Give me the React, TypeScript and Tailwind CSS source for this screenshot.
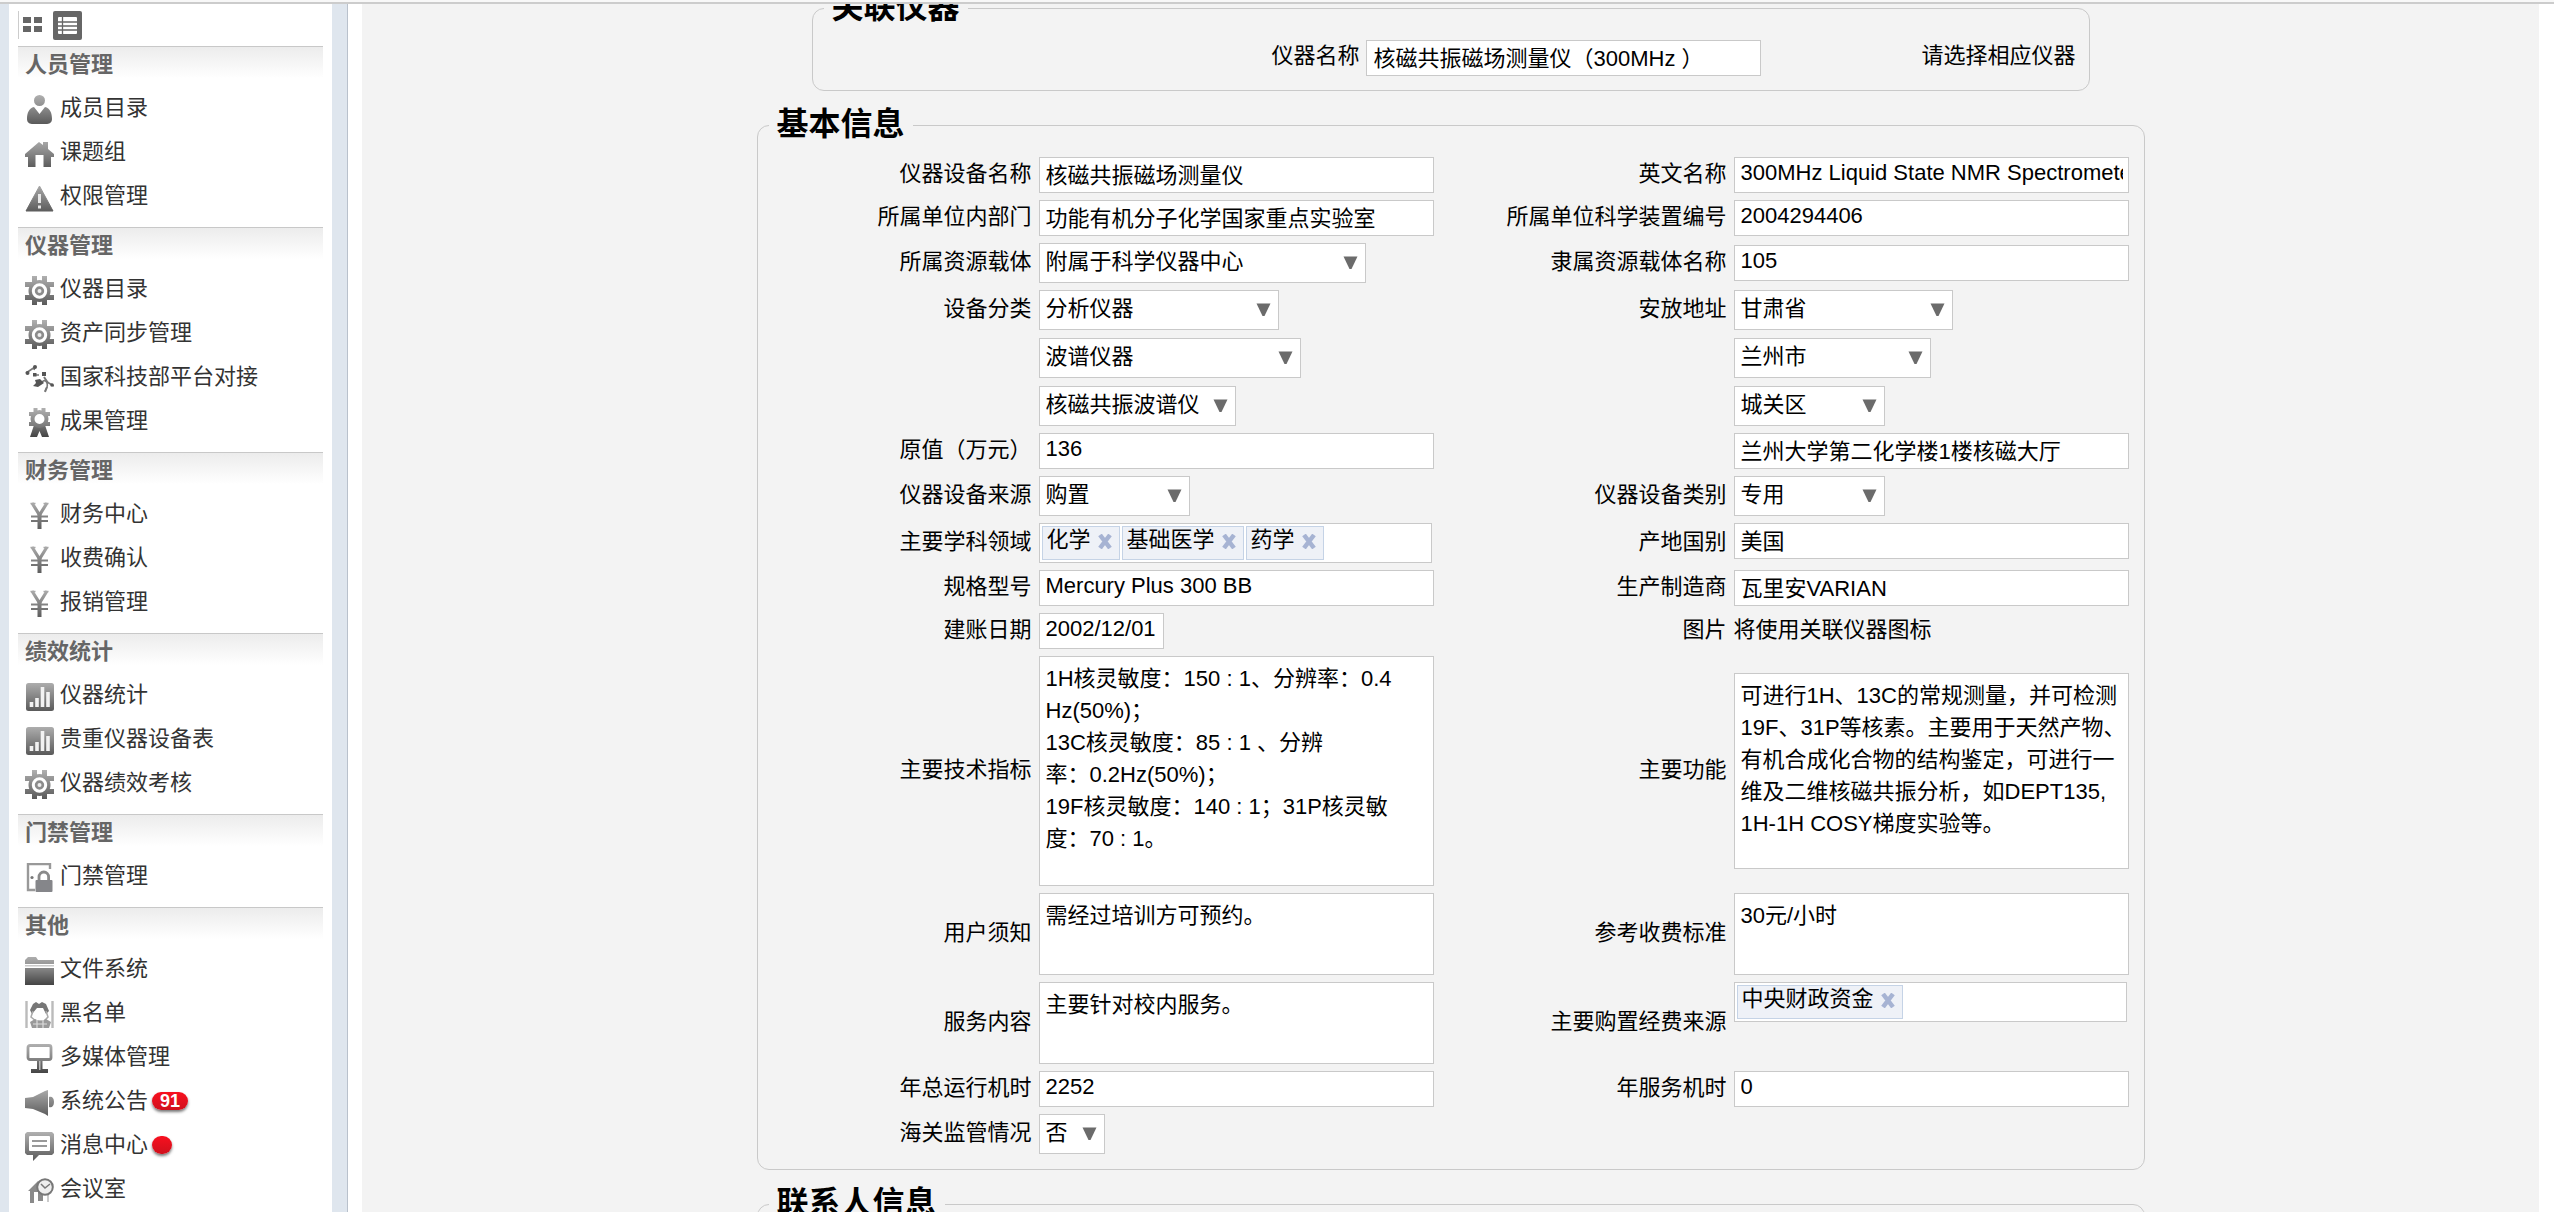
import type { ReactNode } from "react";
import { clsx } from "clsx";

// ── Sidebar icons (29×29, shared vertical gradient) ──────────────────────────

const FILL = "url(#icon-shade)";

const ICONS: Record<string, ReactNode> = {
  user: (
    <g fill={FILL}>
      <circle cx="14.5" cy="5.5" r="5.5" />
      <path d="M2 24c0-6 2-11 7-12l5.5 7 5.500-7c5 1 7 6 7 12 0 4-3 5-6 5H8c-3 0-6-1-6-5z" />
    </g>
  ),
  home: <path fill={FILL} d="M0 15L14 3l4 3V3h5v7l6 5v3h-3v10h-7.500V16h-8v12H3V18H0z" />,
  warning: (
    <g>
      <path fill={FILL} d="M14.500 3L28 28H1z" stroke={FILL} strokeLinejoin="round" />
      <path d="M14.500 11v9M14.500 22.500v3" stroke="#e8e8e8" strokeWidth="3" />
    </g>
  ),
  gear: (
    <g>
      <g fill={FILL}>
        <path d="M7 0h5v29H7zM17 0h5v29h-5z" />
        <path d="M0 6h29v5H0zM0 19h29v5H0z" />
      </g>
      <circle cx="14.500" cy="15" r="11" fill={FILL} />
      <path d="M12.500 0h4v3h-4zM12.500 26.500h4V29h-4z" fill="#fff" />
      <circle cx="14.500" cy="15" r="6.200" fill="#8c8c8c" stroke="#fff" strokeWidth="3" />
      <circle cx="14.500" cy="15" r="2" fill="#eee" />
    </g>
  ),
  network: (
    <g stroke="#777" fill="#555">
      <path d="M1 9l9-6M10 3l-1 3M17 18c4-4 6 2 5 5l-2 4M22 18l7 4M11 11h3" strokeWidth="1.600" fill="none" />
      <circle cx="10" cy="3" r="2" stroke="none" />
      <circle cx="2.500" cy="9" r="2" stroke="none" />
      <rect x="8" y="9" width="3.500" height="3.500" stroke="none" />
      <rect x="17" y="8" width="4" height="4" stroke="none" />
      <path d="M10 16l5-1 4 4-6 4-5-1 3-3z" stroke="none" />
      <path d="M19 13l4 6M22 23l-2 5" strokeWidth="2" />
      <circle cx="27" cy="21" r="1.800" stroke="none" />
    </g>
  ),
  award: (
    <g>
      <path fill="url(#icon-dark)" d="M9 17L5 29h7l2.500-6 2.500 6h7l-4-12z" />
      <path stroke={FILL} strokeWidth="4" d="M10.500 0v6M18.500 0v6M4 6h6M19 6h6M4 16h6M19 16h6" />
      <circle cx="14.500" cy="11" r="7" fill="#fff" stroke={FILL} strokeWidth="4" />
    </g>
  ),
  yen: (
    <g stroke={FILL} fill="none">
      <path d="M7 2l7.500 12L22 2" strokeWidth="3.200" />
      <path d="M6 15.500h17M6 20h17" strokeWidth="2.200" />
      <path d="M14.500 13v15" strokeWidth="4" />
      <path d="M5.500 2.500h5M18.500 2.500h5" strokeWidth="1.500" />
    </g>
  ),
  chart: (
    <g>
      <rect x="1" y="1" width="28" height="28" rx="2.500" fill={FILL} />
      <path d="M6.500 25v-5M12 25v-9M17.500 25V5M23 25V10" stroke="#f2f2f2" strokeWidth="3.600" />
    </g>
  ),
  door: (
    <g>
      <path d="M25 6V1H3v26h7" fill="none" stroke="#999" strokeWidth="2.400" />
      <circle cx="7" cy="14.500" r="1.600" fill="#777" />
      <path d="M14 18v-4a4.800 5 0 0 1 9.600 0v4" fill="none" stroke="#8a8a8a" strokeWidth="2.800" />
      <rect x="10.500" y="17" width="17" height="12" rx="1" fill="#85868a" />
    </g>
  ),
  folder: (
    <g fill={FILL}>
      <path d="M0 4l3-3h8l2 3h16v4H0z" />
      <path d="M0 12h29v17H0z" fill="url(#icon-dark)" />
      <path d="M0 9h29v1.500H0z" opacity=".5" />
    </g>
  ),
  blacklist: (
    <g>
      <path d="M1.500 1v27M27.500 1v27" stroke="#bbb" strokeWidth="2.400" />
      <path d="M8 4l3-2 3 2 3-2 4 2 3 7-3 3-3-6h-6l-5 6-2-4z" fill="#777" />
      <path d="M8 11l-2 6 5 4h8l4-4-2-6" fill="none" stroke="#aaa" strokeWidth="1.500" />
      <path d="M5 22l5-3 4 2h3l4-2 5 3-2 6H7z" fill="#9a9a9a" />
      <path d="M8 24h14M12 20v8M18 20v8" stroke="#ddd" strokeWidth="1.200" />
    </g>
  ),
  screen: (
    <g>
      <rect x="3" y="1.500" width="23" height="14" rx="2" fill="#fff" stroke={FILL} strokeWidth="2.800" />
      <path d="M12 17h5.500v8H23v4H6v-4h6z" fill="url(#icon-dark)" />
      <path d="M14 17h1.500v9H14z" fill="#bbb" />
    </g>
  ),
  horn: (
    <g fill={FILL}>
      <path d="M0 10l8-1 12-6 3-1v26l-3-2-12-5-8-1z" />
      <path d="M24 9c3-1 5 1 5 5s-2 6-5 5z" />
    </g>
  ),
  message: (
    <g>
      <path d="M2 0h25l2 2v19l-2 2H14l-6 6v-6H2l-2-2V2z" fill={FILL} />
      <rect x="4" y="4" width="21" height="15" rx="1" fill="#fff" />
      <path d="M7 9h15M7 14h15" stroke="#999" strokeWidth="1.800" />
    </g>
  ),
  meeting: (
    <g>
      <path d="M3 15L13 5l5 5v15h-5v-9H9v11H5V15z" fill="#8a8a8a" />
      <path d="M16 17h7v9" stroke="#bbb" strokeWidth="1.500" fill="none" />
      <circle cx="20" cy="11" r="7.800" fill="#eee" stroke="#777" strokeWidth="2" />
      <path d="M16 8l4 4 5-4" fill="none" stroke="#777" strokeWidth="1.500" />
    </g>
  ),
};

type MenuItem = { icon: string; text: string; badge?: string };

const MENU: { title: string; items: MenuItem[] }[] = [
  {
    title: "人员管理",
    items: [
      { icon: "user", text: "成员目录" },
      { icon: "home", text: "课题组" },
      { icon: "warning", text: "权限管理" },
    ],
  },
  {
    title: "仪器管理",
    items: [
      { icon: "gear", text: "仪器目录" },
      { icon: "gear", text: "资产同步管理" },
      { icon: "network", text: "国家科技部平台对接" },
      { icon: "award", text: "成果管理" },
    ],
  },
  {
    title: "财务管理",
    items: [
      { icon: "yen", text: "财务中心" },
      { icon: "yen", text: "收费确认" },
      { icon: "yen", text: "报销管理" },
    ],
  },
  {
    title: "绩效统计",
    items: [
      { icon: "chart", text: "仪器统计" },
      { icon: "chart", text: "贵重仪器设备表" },
      { icon: "gear", text: "仪器绩效考核" },
    ],
  },
  {
    title: "门禁管理",
    items: [{ icon: "door", text: "门禁管理" }],
  },
  {
    title: "其他",
    items: [
      { icon: "folder", text: "文件系统" },
      { icon: "blacklist", text: "黑名单" },
      { icon: "screen", text: "多媒体管理" },
      { icon: "horn", text: "系统公告", badge: "91" },
      { icon: "message", text: "消息中心", badge: "" },
      { icon: "meeting", text: "会议室" },
    ],
  },
];

// ── Sidebar ──────────────────────────────────────────────────────────────────

function Sidebar() {
  return (
    <nav className="w-[348px] shrink-0 border-r border-[#b9c1cc] bg-[#dfe6ee] pl-[9px] pr-[15px]">
      <svg className="absolute" width="0" height="0" aria-hidden="true">
        <defs>
          <linearGradient id="icon-shade" gradientUnits="userSpaceOnUse" x1="0" y1="0" x2="0" y2="29">
            <stop offset="0" stopColor="#b0b0b0" />
            <stop offset="1" stopColor="#5a5a5a" />
          </linearGradient>
          <linearGradient id="icon-dark" gradientUnits="userSpaceOnUse" x1="0" y1="12" x2="0" y2="29">
            <stop offset="0" stopColor="#888" />
            <stop offset="1" stopColor="#444" />
          </linearGradient>
        </defs>
      </svg>

      <div className="h-full bg-white px-[9px]">
        <div className="flex h-[42px] items-center gap-[11px]">
          <button type="button" aria-label="图标视图" className="flex h-7 items-center border-l border-[#ccc] pl-1">
            <svg width="19" height="16" viewBox="0 0 19 16" fill="#666">
              <path d="M0 0h8v6H0zM11 0h8v6h-8zM0 9h8v6H0zM11 9h8v6h-8z" />
            </svg>
          </button>
          <button type="button" aria-label="列表视图">
            <svg className="block" width="29" height="29" viewBox="0 0 29 29">
              <rect width="29" height="29" rx="2" fill="#666" />
              <rect x="5" y="6" width="19" height="17" rx="1" fill="#fff" />
              <path d="M5 11h19M5 15h19M5 19h19M9.500 6v17" stroke="#666" strokeWidth="1.300" />
            </svg>
          </button>
        </div>

        {MENU.map((group) => (
          <section key={group.title} className="pb-[9px]">
            <h2 className="h-10 border-t border-[#c8c8c8] bg-linear-to-b from-[#ececec] to-white to-80% pl-[7px] text-[22px] leading-9 font-bold text-[#666]">
              {group.title}
            </h2>
            <ul>
              {group.items.map((item) => (
                <li key={item.text}>
                  <a href="#" className="flex h-11 items-center pl-[7px]">
                    <svg className="mt-[2px] mr-[6px] shrink-0" width="29" height="29" viewBox="0 0 29 29" fill="none">
                      {ICONS[item.icon]}
                    </svg>
                    <span className="text-[22px] leading-8 text-[#333]">{item.text}</span>
                    {item.badge !== undefined && (
                      <span
                        className={clsx(
                          "ml-1 flex h-[18px] items-center justify-center rounded-full bg-linear-to-b from-[#f8101f] to-[#d0101c] text-lg font-bold text-white shadow-[0_2px_3px_#777]",
                          item.badge ? "w-9" : "w-5"
                        )}
                      >
                        {item.badge}
                      </span>
                    )}
                  </a>
                </li>
              ))}
            </ul>
          </section>
        ))}
      </div>
    </nav>
  );
}

// ── Form controls ────────────────────────────────────────────────────────────

type Field =
  | { id: string; label?: string; kind: "text" | "select" | "area"; value: string; size: string }
  | { id: string; label?: string; kind: "tags"; value: string[] }
  | { id: string; label?: string; kind: "note"; value: string };

const BOX = "block border border-[#c9c9c9] bg-white pl-[6px] pr-[5px] text-[22px] text-black outline-none rounded-none";

function Select({ id, name, value, size }: { id: string; name: string; value: string; size: string }) {
  return (
    <div className={clsx("relative", size)}>
      <select id={id} aria-label={name} defaultValue={value} className={clsx(BOX, "h-10 w-full appearance-none pb-[3px]")}>
        <option>{value}</option>
      </select>
      <svg className="pointer-events-none absolute top-[13px] right-2" width="15" height="14" viewBox="0 0 15 14">
        <path d="M0.500 0.500h14L8.500 13h-2z" fill="#6b6b6b" />
      </svg>
    </div>
  );
}

function Tags({ id, name, value }: { id: string; name: string; value: string[] }) {
  return (
    <div className="flex h-10 w-[393px] gap-[2px] self-start border border-[#c9c9c9] bg-white p-[2px]">
      {value.map((tag) => (
        <span key={tag} className="flex shrink-0 items-center border border-[#c5d3e6] bg-[#eef1f7] pl-1 text-[22px]">
          <span className="pb-[6px] leading-7">{tag}</span>
          <button type="button" aria-label={`移除${tag}`} className="px-[7px] pb-[3px]">
            <svg className="block" width="14" height="15" viewBox="0 0 14 15">
              <path d="M2 1l10 13M12 1L2 14" stroke="#a6b3d3" strokeWidth="4.500" />
            </svg>
          </button>
        </span>
      ))}
      <input id={id} aria-label={name} className="w-4 min-w-0 flex-1 outline-none" />
    </div>
  );
}

function Control({ field }: { field: Field }) {
  const name = field.label ?? "详细信息";
  switch (field.kind) {
    case "text":
      return <input id={field.id} aria-label={name} defaultValue={field.value} className={clsx(BOX, "h-9 pb-[5px] leading-7", field.size)} />;
    case "area":
      return (
        <textarea
          id={field.id}
          aria-label={name}
          defaultValue={field.value}
          className={clsx(BOX, "w-full resize-none overflow-hidden pt-[6px] leading-8 whitespace-pre", field.size)}
        />
      );
    case "select":
      return <Select id={field.id} name={name} value={field.value} size={field.size} />;
    case "tags":
      return <Tags id={field.id} name={name} value={field.value} />;
    case "note":
      return <span id={field.id} className="pb-[3px]">{field.value}</span>;
  }
}

const SPEC = `1H核灵敏度：150 : 1、分辨率：0.4
Hz(50%)；
13C核灵敏度：85 : 1 、分辨
率：0.2Hz(50%)；
19F核灵敏度：140 : 1；31P核灵敏
度：70 : 1。`;

const USAGE = `可进行1H、13C的常规测量，并可检测
19F、31P等核素。主要用于天然产物、
有机合成化合物的结构鉴定，可进行一
维及二维核磁共振分析，如DEPT135,
1H-1H COSY梯度实验等。`;

const ROWS: [Field, Field | null][] = [
  [
    { id: "name", label: "仪器设备名称", kind: "text", value: "核磁共振磁场测量仪", size: "w-full" },
    { id: "en-name", label: "英文名称", kind: "text", value: "300MHz Liquid State NMR Spectrometer", size: "w-full" },
  ],
  [
    { id: "dept", label: "所属单位内部门", kind: "text", value: "功能有机分子化学国家重点实验室", size: "w-full" },
    { id: "device-no", label: "所属单位科学装置编号", kind: "text", value: "2004294406", size: "w-full" },
  ],
  [
    { id: "carrier", label: "所属资源载体", kind: "select", value: "附属于科学仪器中心", size: "w-[327px]" },
    { id: "carrier-name", label: "隶属资源载体名称", kind: "text", value: "105", size: "w-full" },
  ],
  [
    { id: "class-1", label: "设备分类", kind: "select", value: "分析仪器", size: "w-[240px]" },
    { id: "province", label: "安放地址", kind: "select", value: "甘肃省", size: "w-[219px]" },
  ],
  [
    { id: "class-2", kind: "select", value: "波谱仪器", size: "w-[262px]" },
    { id: "city", kind: "select", value: "兰州市", size: "w-[197px]" },
  ],
  [
    { id: "class-3", kind: "select", value: "核磁共振波谱仪", size: "w-[197px]" },
    { id: "district", kind: "select", value: "城关区", size: "w-[151px]" },
  ],
  [
    { id: "price", label: "原值（万元）", kind: "text", value: "136", size: "w-full" },
    { id: "street", kind: "text", value: "兰州大学第二化学楼1楼核磁大厅", size: "w-full" },
  ],
  [
    { id: "source", label: "仪器设备来源", kind: "select", value: "购置", size: "w-[151px]" },
    { id: "category", label: "仪器设备类别", kind: "select", value: "专用", size: "w-[151px]" },
  ],
  [
    { id: "subjects", label: "主要学科领域", kind: "tags", value: ["化学", "基础医学", "药学"] },
    { id: "country", label: "产地国别", kind: "text", value: "美国", size: "w-full self-start" },
  ],
  [
    { id: "model", label: "规格型号", kind: "text", value: "Mercury Plus 300 BB", size: "w-full" },
    { id: "maker", label: "生产制造商", kind: "text", value: "瓦里安VARIAN", size: "w-full" },
  ],
  [
    { id: "date", label: "建账日期", kind: "text", value: "2002/12/01", size: "w-[125px]" },
    { id: "picture", label: "图片", kind: "note", value: "将使用关联仪器图标" },
  ],
  [
    { id: "spec", label: "主要技术指标", kind: "area", value: SPEC, size: "h-[230px]" },
    { id: "usage", label: "主要功能", kind: "area", value: USAGE, size: "h-[196px]" },
  ],
  [
    { id: "notice", label: "用户须知", kind: "area", value: "需经过培训方可预约。", size: "h-[82px]" },
    { id: "fee", label: "参考收费标准", kind: "area", value: "30元/小时", size: "h-[82px]" },
  ],
  [
    { id: "service", label: "服务内容", kind: "area", value: "主要针对校内服务。", size: "h-[82px]" },
    { id: "fund", label: "主要购置经费来源", kind: "tags", value: ["中央财政资金"] },
  ],
  [
    { id: "run-hours", label: "年总运行机时", kind: "text", value: "2252", size: "w-full" },
    { id: "serve-hours", label: "年服务机时", kind: "text", value: "0", size: "w-full" },
  ],
  [{ id: "customs", label: "海关监管情况", kind: "select", value: "否", size: "w-[66px]" }, null],
];

function FieldCells({ field }: { field: Field }) {
  const stacked = !field.label && field.kind === "select";
  return (
    <>
      <div className="flex items-center justify-end">
        {field.label && (
          <label htmlFor={field.id} className="pb-[3px] leading-7 whitespace-nowrap">
            {field.label}
          </label>
        )}
      </div>
      <div className={clsx("flex items-center", stacked && "pt-px")}>
        <Control field={field} />
      </div>
    </>
  );
}

function Panel({ title, size, children }: { title: string; size: string; children?: ReactNode }) {
  return (
    <fieldset className={clsx("mx-auto w-full rounded-xl border border-[#c9c9c9] pl-[11px]", size)}>
      <legend className="px-2 pb-[2px] text-[32px] leading-[38px] font-bold">{title}</legend>
      {children}
    </fieldset>
  );
}

// ── Page ─────────────────────────────────────────────────────────────────────

export default function App() {
  return (
    <div className="flex h-screen flex-col overflow-hidden bg-white font-['Liberation_Sans','Noto_Sans_CJK_SC',sans-serif] text-[22px] text-black">
      <div className="h-1 shrink-0 border-b-2 border-[#ccc] bg-[#f8f8f8]" />
      <div className="flex min-h-0 flex-1">
        <Sidebar />
        <main className="mr-[15px] ml-[14px] min-w-0 flex-1 overflow-hidden bg-[#f3f3f3]">
          <form className="-mt-4 flex flex-col gap-[14px]">
            <Panel title="关联仪器" size="max-w-[1278px]">
              <div className="flex items-center justify-end pt-3 pr-[13px] pb-[14px]">
                <label htmlFor="linked" className="pr-[7px] pb-1 leading-7">仪器名称</label>
                <input
                  id="linked"
                  defaultValue="核磁共振磁场测量仪（300MHz ）"
                  className={clsx(BOX, "h-9 w-[395px] pb-[5px] leading-7")}
                />
                <span className="pb-1 pl-[160px] leading-7">请选择相应仪器</span>
              </div>
            </Panel>

            <Panel title="基本信息" size="max-w-[1388px]">
              <div className="grid grid-cols-[263px_395px_1fr_395px] gap-[7px] pt-3 pr-[15px] pb-[15px]">
                {ROWS.map(([left, right]) => (
                  <div key={left.id} className="contents">
                    <FieldCells field={left} />
                    {right && <FieldCells field={right} />}
                  </div>
                ))}
              </div>
            </Panel>

            <Panel title="联系人信息" size="max-w-[1388px]">
              <div className="h-40" />
            </Panel>
          </form>
        </main>
      </div>
    </div>
  );
}
